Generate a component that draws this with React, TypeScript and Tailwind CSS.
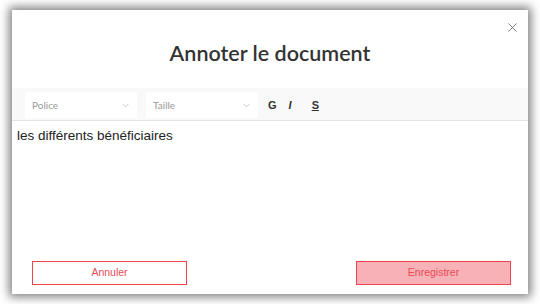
import { X, ChevronDown } from "lucide-react";

function Select({ label }: { label: string }) {
  return (
    <div className="flex h-[26px] w-[112px] items-center justify-between bg-white pl-[7px] pr-[6px]">
      <span className="text-[10px] text-[#999]">{label}</span>
      <ChevronDown size={11} strokeWidth={1.2} className="text-[#a0a0a0]" />
    </div>
  );
}

export default function App() {
  return (
    <div className="h-[304px] w-[540px] overflow-hidden bg-white pl-[12px] pt-[10px] font-['Lato',sans-serif]">
      <div className="relative flex h-[284px] w-[516px] flex-col bg-white shadow-[0_0_9px_3px_rgba(0,0,0,0.5)]">
        <button className="absolute right-[8px] top-[10px] text-[#555]">
          <X size={15} strokeWidth={1.2} />
        </button>

        <h1 className="mt-[30px] text-center text-[21.5px] font-semibold leading-[26px] text-[#333]">
          Annoter le document
        </h1>

        <div className="mt-[22px] flex h-[33px] items-start gap-[9px] border-b border-[#e4e4e4] bg-[#f9f9f9] pl-[13px] pt-[4px]">
          <Select label="Police" />
          <Select label="Taille" />
          <div className="flex h-[26px] items-center gap-[12px] pl-[1px] font-['Liberation_Sans',sans-serif] text-[11px] font-bold text-[#333]">
            <span>G</span>
            <span className="italic">I</span>
            <span className="ml-[8px] underline">S</span>
          </div>
        </div>

        <div className="flex-1 pl-[5px] pt-[5px] font-['Liberation_Sans',sans-serif] text-[13.5px] text-[#222]">
          les différents bénéficiaires
        </div>

        <div className="flex justify-between px-[20px] pb-[9px] pr-[17px] font-['Liberation_Sans',sans-serif] text-[10.5px] text-[#e84a55]">
          <button className="h-[24px] w-[155px] border border-[#ee4450] bg-white">Annuler</button>
          <button className="h-[24px] w-[155px] border border-[#ee4450] bg-[#f7b1b7]">Enregistrer</button>
        </div>
      </div>
    </div>
  );
}
